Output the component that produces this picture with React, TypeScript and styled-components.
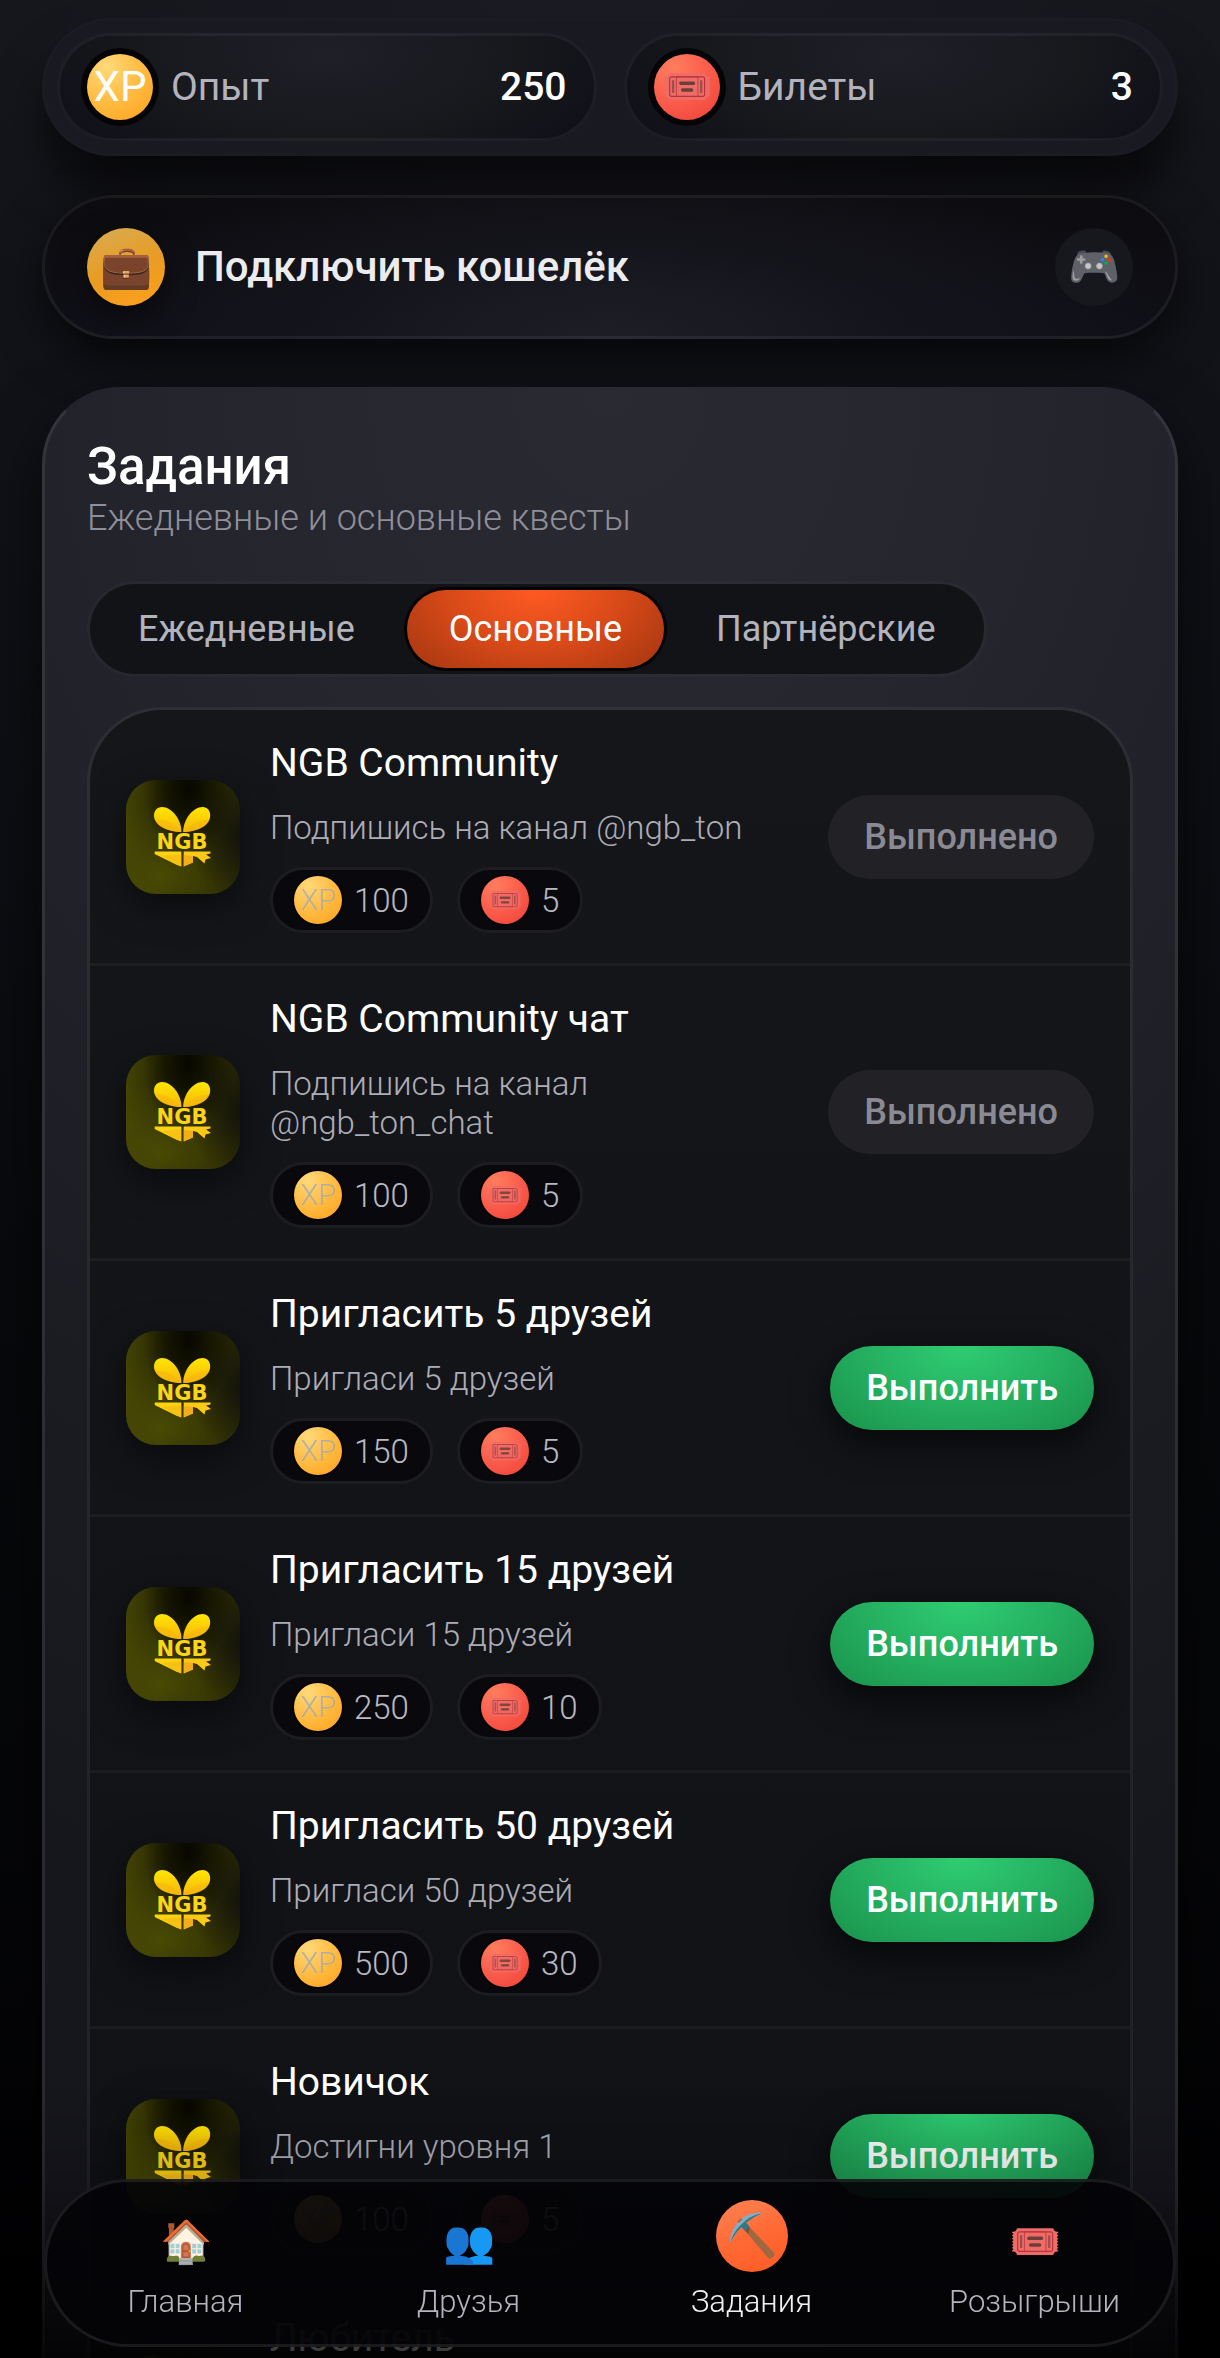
import React, { useState } from "react";
import styled, { createGlobalStyle, css } from "styled-components";

const GlobalStyle = createGlobalStyle`
  * { box-sizing: border-box; }
  body {
    margin: 0;
    background: #050608;
    color: #fff;
    font-family: Roboto, "Noto Sans", sans-serif;
  }
  button { font: inherit; color: inherit; border: 0; background: none; padding: 0; cursor: pointer; }
  h1, h2, p, ul { margin: 0; padding: 0; font-weight: 400; }
  ul { list-style: none; }
`;

const Screen = styled.div`
  height: 100vh;
  overflow: hidden;
  padding: 18px 42px 0;
  background:
    radial-gradient(70% 14% at 50% 0, #1b1b24 0%, rgba(27, 27, 36, 0) 100%),
    linear-gradient(180deg, #141519 0%, #111218 18%, #08090c 55%, #020203 100%);
`;

const StatsBar = styled.header`
  display: grid;
  grid-template-columns: 1fr 1fr;
  gap: 27px;
  padding: 12px;
  border: 3px solid rgba(255, 255, 255, 0.01);
  border-radius: 69px;
  background: #191921;
  box-shadow: 0 36px 48px rgba(0, 0, 0, 0.6);
`;

const Stat = styled.div`
  display: flex;
  align-items: center;
  gap: 18px;
  padding: 18px 27px;
  border: 3px solid rgba(255, 255, 255, 0.05);
  border-radius: 54px;
  background: radial-gradient(60% 130% at 50% 20%, #1f1f28 0%, #17181c 60%, #0f0f18 100%) border-box;
`;

const StatLabel = styled.span`
  flex: 1;
  font-size: 39px;
  line-height: 46px;
  color: #b3b3bd;
`;

const StatValue = styled.strong`
  font-size: 39px;
  line-height: 46px;
  font-weight: 500;
`;

type TokenKind = "xp" | "ticket";

const tokenFill = {
  xp: "radial-gradient(circle at 30% 20%, #ffd97a 0%, #ffbe45 45%, #ffa01c 100%)",
  ticket: "radial-gradient(circle at 30% 20%, #ff7d5e 0%, #fb5c4b 50%, #ee4137 100%)",
};

const Token = styled.span<{ $kind: TokenKind; $small?: boolean }>`
  display: grid;
  place-items: center;
  flex: none;
  border-radius: 50%;
  background: ${(p) => tokenFill[p.$kind]};
  ${(p) =>
    p.$small
      ? css`
          width: 48px;
          height: 48px;
          font-size: 29px;
          line-height: 34px;
          color: rgba(170, 170, 182, 0.85);
          box-shadow: 0 0 0 2px rgba(0, 0, 0, 0.5);
        `
      : css`
          width: 66px;
          height: 66px;
          font-size: 42px;
          line-height: 48px;
          color: #fff;
          box-shadow: 0 0 0 6px #050507;
        `}
`;

const WalletButton = styled.button`
  display: flex;
  align-items: center;
  gap: 30px;
  width: 100%;
  margin-top: 39px;
  padding: 30px 42px;
  border: 3px solid rgba(255, 255, 255, 0.06);
  border-radius: 72px;
  background:
    radial-gradient(50% 140% at 50% 100%, #1e1e27 0%, rgba(24, 24, 32, 0.6) 50%, rgba(15, 15, 22, 0) 100%) border-box,
    linear-gradient(180deg, #0c0c0f, #0f0f17) border-box;
  box-shadow: 0 18px 48px rgba(0, 0, 0, 0.6);
  text-align: left;
`;

const RoundIcon = styled.span<{ $tone: "amber" | "dark" }>`
  display: grid;
  place-items: center;
  flex: none;
  width: 78px;
  height: 78px;
  border-radius: 50%;
  font-size: 42px;
  line-height: 48px;
  ${(p) =>
    p.$tone === "amber"
      ? css`
          background: linear-gradient(160deg, #d8ac55 0%, #e89c24 50%, #ffa01a 100%);
          box-shadow: 0 12px 30px rgba(0, 0, 0, 0.5);
        `
      : css`
          background: #17171e;
        `}
`;

const WalletLabel = styled.span`
  flex: 1;
  font-size: 42px;
  line-height: 48px;
  font-weight: 500;
  color: #ececef;
`;

const Card = styled.section`
  margin-top: 48px;
  padding: 47px 42px 42px;
  border: 3px solid rgba(255, 255, 255, 0.08);
  border-top-color: transparent;
  border-radius: 78px;
  background: radial-gradient(120% 1600px at 50% 0, #2a2a32 0%, #25252e 30%, #1c1c23 70%, #16161d 100%) border-box;
  box-shadow: 0 24px 60px rgba(0, 0, 0, 0.6);
`;

const CardTitle = styled.h1`
  font-size: 51px;
  line-height: 60px;
  font-weight: 500;
`;

const CardSubtitle = styled.p`
  font-size: 36px;
  line-height: 42px;
  font-weight: 300;
  color: #8f8f9a;
`;

const Tabs = styled.div`
  display: inline-flex;
  gap: 10px;
  margin-top: 42px;
  padding: 6px;
  border: 3px solid rgba(255, 255, 255, 0.02);
  border-radius: 48px;
  background: #121317 padding-box;
`;

const Tab = styled.button<{ $active: boolean }>`
  padding: 18px 42px;
  border-radius: 39px;
  font-size: 36px;
  line-height: 42px;
  color: #b3b3bd;
  ${(p) =>
    p.$active &&
    css`
      color: #fff;
      background: radial-gradient(60% 130% at 50% 0, #ff5a22 0%, #d94a19 55%, #b03a12 100%);
      box-shadow: 0 0 0 3px #050304;
    `}
`;

const TaskList = styled.ul`
  margin-top: 30px;
  border: 3px solid rgba(255, 255, 255, 0.05);
  border-radius: 75px;
  background: linear-gradient(180deg, #151619 0%, #131418 40%, #101115 100%) padding-box;
  overflow: hidden;
`;

const TaskRow = styled.li`
  display: flex;
  align-items: center;
  gap: 30px;
  padding: 30px 36px;
  & + & {
    border-top: 3px solid rgba(255, 255, 255, 0.04);
  }
`;

const LogoTile = styled.svg`
  flex: none;
  width: 114px;
  height: 114px;
  border-radius: 30px;
  box-shadow: 0 12px 36px rgba(0, 0, 0, 0.5);
  background:
    radial-gradient(50% 60% at 106% 52%, rgba(16, 16, 12, 0.95) 0%, rgba(16, 16, 12, 0) 100%),
    radial-gradient(40% 60% at 55% 8%, #070700 0%, rgba(7, 7, 0, 0) 100%),
    radial-gradient(85% 60% at 30% 85%, #4a4a05 0%, rgba(50, 50, 0, 0) 100%),
    linear-gradient(90deg, #434305 0%, #232302 40%, #2c2c04 100%);
`;

const TaskBody = styled.div`
  flex: 1;
  min-width: 0;
`;

const TaskTitle = styled.h2`
  font-size: 39px;
  line-height: 46px;
`;

const TaskText = styled.p`
  margin-top: 22px;
  font-size: 33px;
  line-height: 39px;
  font-weight: 300;
  color: #adadb8;
`;

const Rewards = styled.div`
  display: flex;
  gap: 24px;
  margin-top: 20px;
`;

const Reward = styled.span`
  display: inline-flex;
  align-items: center;
  gap: 12px;
  padding: 6px 21px;
  border: 3px solid #1d1d21;
  border-radius: 33px;
  background: #09090d;
  font-size: 33px;
  line-height: 39px;
  font-weight: 300;
  color: #b9b9c2;
`;

const ActionButton = styled.button`
  flex: none;
  padding: 21px 36px;
  border-radius: 42px;
  font-size: 36px;
  line-height: 42px;
  font-weight: 500;
  background: radial-gradient(70% 140% at 50% 0, #2fcd72 0%, #25b161 50%, #1a924c 100%);
  box-shadow: 0 12px 36px rgba(0, 0, 0, 0.65);
  &:disabled {
    color: #8a8a94;
    background: #222226;
    box-shadow: none;
    cursor: default;
  }
`;

const BottomFade = styled.div`
  position: fixed;
  inset: auto 0 0 0;
  height: 270px;
  background: linear-gradient(180deg, rgba(0, 0, 0, 0) 0%, rgba(0, 0, 0, 0.15) 35%, rgba(0, 0, 0, 0.8) 100%);
  pointer-events: none;
`;

const BottomNav = styled.nav`
  position: fixed;
  inset: auto 44px 11px;
  display: grid;
  grid-template-columns: repeat(4, 1fr);
  align-items: end;
  gap: 30px;
  padding: 18px 12px 24px;
  border: 3px solid rgba(255, 255, 255, 0.09);
  border-radius: 84px;
  background: rgba(4, 4, 8, 0.93);
`;

const NavItem = styled.a<{ $active?: boolean }>`
  display: flex;
  flex-direction: column;
  align-items: center;
  gap: 12px;
  font-size: 31px;
  line-height: 36px;
  text-decoration: none;
  color: ${(p) => (p.$active ? "#f1f1f4" : "#b4b4be")};
`;

const NavIcon = styled.span<{ $active?: boolean }>`
  display: grid;
  place-items: center;
  height: 60px;
  font-size: 42px;
  line-height: 48px;
  color: #fff;
  ${(p) =>
    p.$active &&
    css`
      width: 72px;
      height: 72px;
      border-radius: 50%;
      background: linear-gradient(160deg, #ff8355 0%, #ff6a35 50%, #ff5a24 100%);
    `}
`;

const NavLabel = styled.span`
  font-weight: 300;
`;

interface Task {
  title: string;
  text: string;
  xp: number;
  tickets: number;
  done?: boolean;
}

const tasks: Task[] = [
  { title: "NGB Community", text: "Подпишись на канал @ngb_ton", xp: 100, tickets: 5, done: true },
  { title: "NGB Community чат", text: "Подпишись на канал @ngb_ton_chat", xp: 100, tickets: 5, done: true },
  { title: "Пригласить 5 друзей", text: "Пригласи 5 друзей", xp: 150, tickets: 5 },
  { title: "Пригласить 15 друзей", text: "Пригласи 15 друзей", xp: 250, tickets: 10 },
  { title: "Пригласить 50 друзей", text: "Пригласи 50 друзей", xp: 500, tickets: 30 },
  { title: "Новичок", text: "Достигни уровня 1", xp: 100, tickets: 5 },
  { title: "Любитель", text: "Достигни уровня 5", xp: 250, tickets: 10 },
];

const tabs = ["Ежедневные", "Основные", "Партнёрские"];

const navItems = [
  { icon: "🏠", label: "Главная" },
  { icon: "👥", label: "Друзья" },
  { icon: "⛏️", label: "Задания", active: true },
  { icon: "🎟️", label: "Розыгрыши" },
];

function NgbLogo() {
  return (
    <LogoTile viewBox="0 0 114 114" role="img" aria-label="NGB">
      <defs>
        <linearGradient id="petal" x1="0" y1="0" x2="0" y2="1">
          <stop offset="0" stopColor="#ffe600" />
          <stop offset="1" stopColor="#f7b80c" />
        </linearGradient>
      </defs>
      <path fill="url(#petal)" d="M55.4 52C55.6 40 46 27 36 27C31 27 28 31 28 35.5C28 45 41 52 55.4 52Z" />
      <path fill="url(#petal)" d="M57.2 52C57 40 66.6 27 76.6 27C81.6 27 84.2 31 84.2 35.5C84.2 45 71.6 52 57.2 52Z" />
      <path fill="#f5ae10" opacity="0.4" d="M29 40C36 38 46 42 55.4 52C42 52 31 47 29 40Z" />
      <path fill="#f5ae10" opacity="0.4" d="M83.5 40C76 39 67 42 57.2 52C70 52 81.5 47 83.5 40Z" />
      <text
        x="56"
        y="69"
        textAnchor="middle"
        fill="#fbd516"
        fontFamily="'DejaVu Sans', sans-serif"
        fontWeight="700"
        fontSize="21"
      >
        NGB
      </text>
      <path fill="#fcd411" d="M28.7 71.5H55.3V86.5L50 84.5L28.7 74Z" />
      <path fill="#f3a81a" d="M36 76L55.3 74V86.5L50 84.5Z" opacity="0.4" />
      <path fill="#fcc914" d="M57.7 71.5H84.5V73.5L80 74.5L85 78L79.5 79.5L78.5 83.5L71 77L67 76V82.5L57.7 86.5Z" />
      <path fill="#ee9c22" opacity="0.6" d="M57.7 75L67 76V82.5L57.7 86.5Z" />
    </LogoTile>
  );
}

const tokenGlyph: Record<TokenKind, string> = { xp: "XP", ticket: "🎟️" };

export default function App() {
  const [tab, setTab] = useState("Основные");
  return (
    <Screen>
      <GlobalStyle />
      <StatsBar>
        <Stat>
          <Token $kind="xp">{tokenGlyph.xp}</Token>
          <StatLabel>Опыт</StatLabel>
          <StatValue>250</StatValue>
        </Stat>
        <Stat>
          <Token $kind="ticket">{tokenGlyph.ticket}</Token>
          <StatLabel>Билеты</StatLabel>
          <StatValue>3</StatValue>
        </Stat>
      </StatsBar>

      <WalletButton type="button">
        <RoundIcon $tone="amber">💼</RoundIcon>
        <WalletLabel>Подключить кошелёк</WalletLabel>
        <RoundIcon $tone="dark">🎮</RoundIcon>
      </WalletButton>

      <Card>
        <CardTitle>Задания</CardTitle>
        <CardSubtitle>Ежедневные и основные квесты</CardSubtitle>
        <Tabs role="tablist">
          {tabs.map((name) => (
            <Tab
              key={name}
              type="button"
              role="tab"
              aria-selected={tab === name}
              $active={tab === name}
              onClick={() => setTab(name)}
            >
              {name}
            </Tab>
          ))}
        </Tabs>
        <TaskList>
          {tasks.map((task) => (
            <TaskRow key={task.title}>
              <NgbLogo />
              <TaskBody>
                <TaskTitle>{task.title}</TaskTitle>
                <TaskText>{task.text}</TaskText>
                <Rewards>
                  <Reward>
                    <Token $kind="xp" $small>{tokenGlyph.xp}</Token>
                    {task.xp}
                  </Reward>
                  <Reward>
                    <Token $kind="ticket" $small>{tokenGlyph.ticket}</Token>
                    {task.tickets}
                  </Reward>
                </Rewards>
              </TaskBody>
              <ActionButton type="button" disabled={task.done}>
                {task.done ? "Выполнено" : "Выполнить"}
              </ActionButton>
            </TaskRow>
          ))}
        </TaskList>
      </Card>

      <BottomFade />
      <BottomNav>
        {navItems.map((item) => (
          <NavItem key={item.label} href="#" $active={item.active}>
            <NavIcon $active={item.active}>{item.icon}</NavIcon>
            <NavLabel>{item.label}</NavLabel>
          </NavItem>
        ))}
      </BottomNav>
    </Screen>
  );
}
